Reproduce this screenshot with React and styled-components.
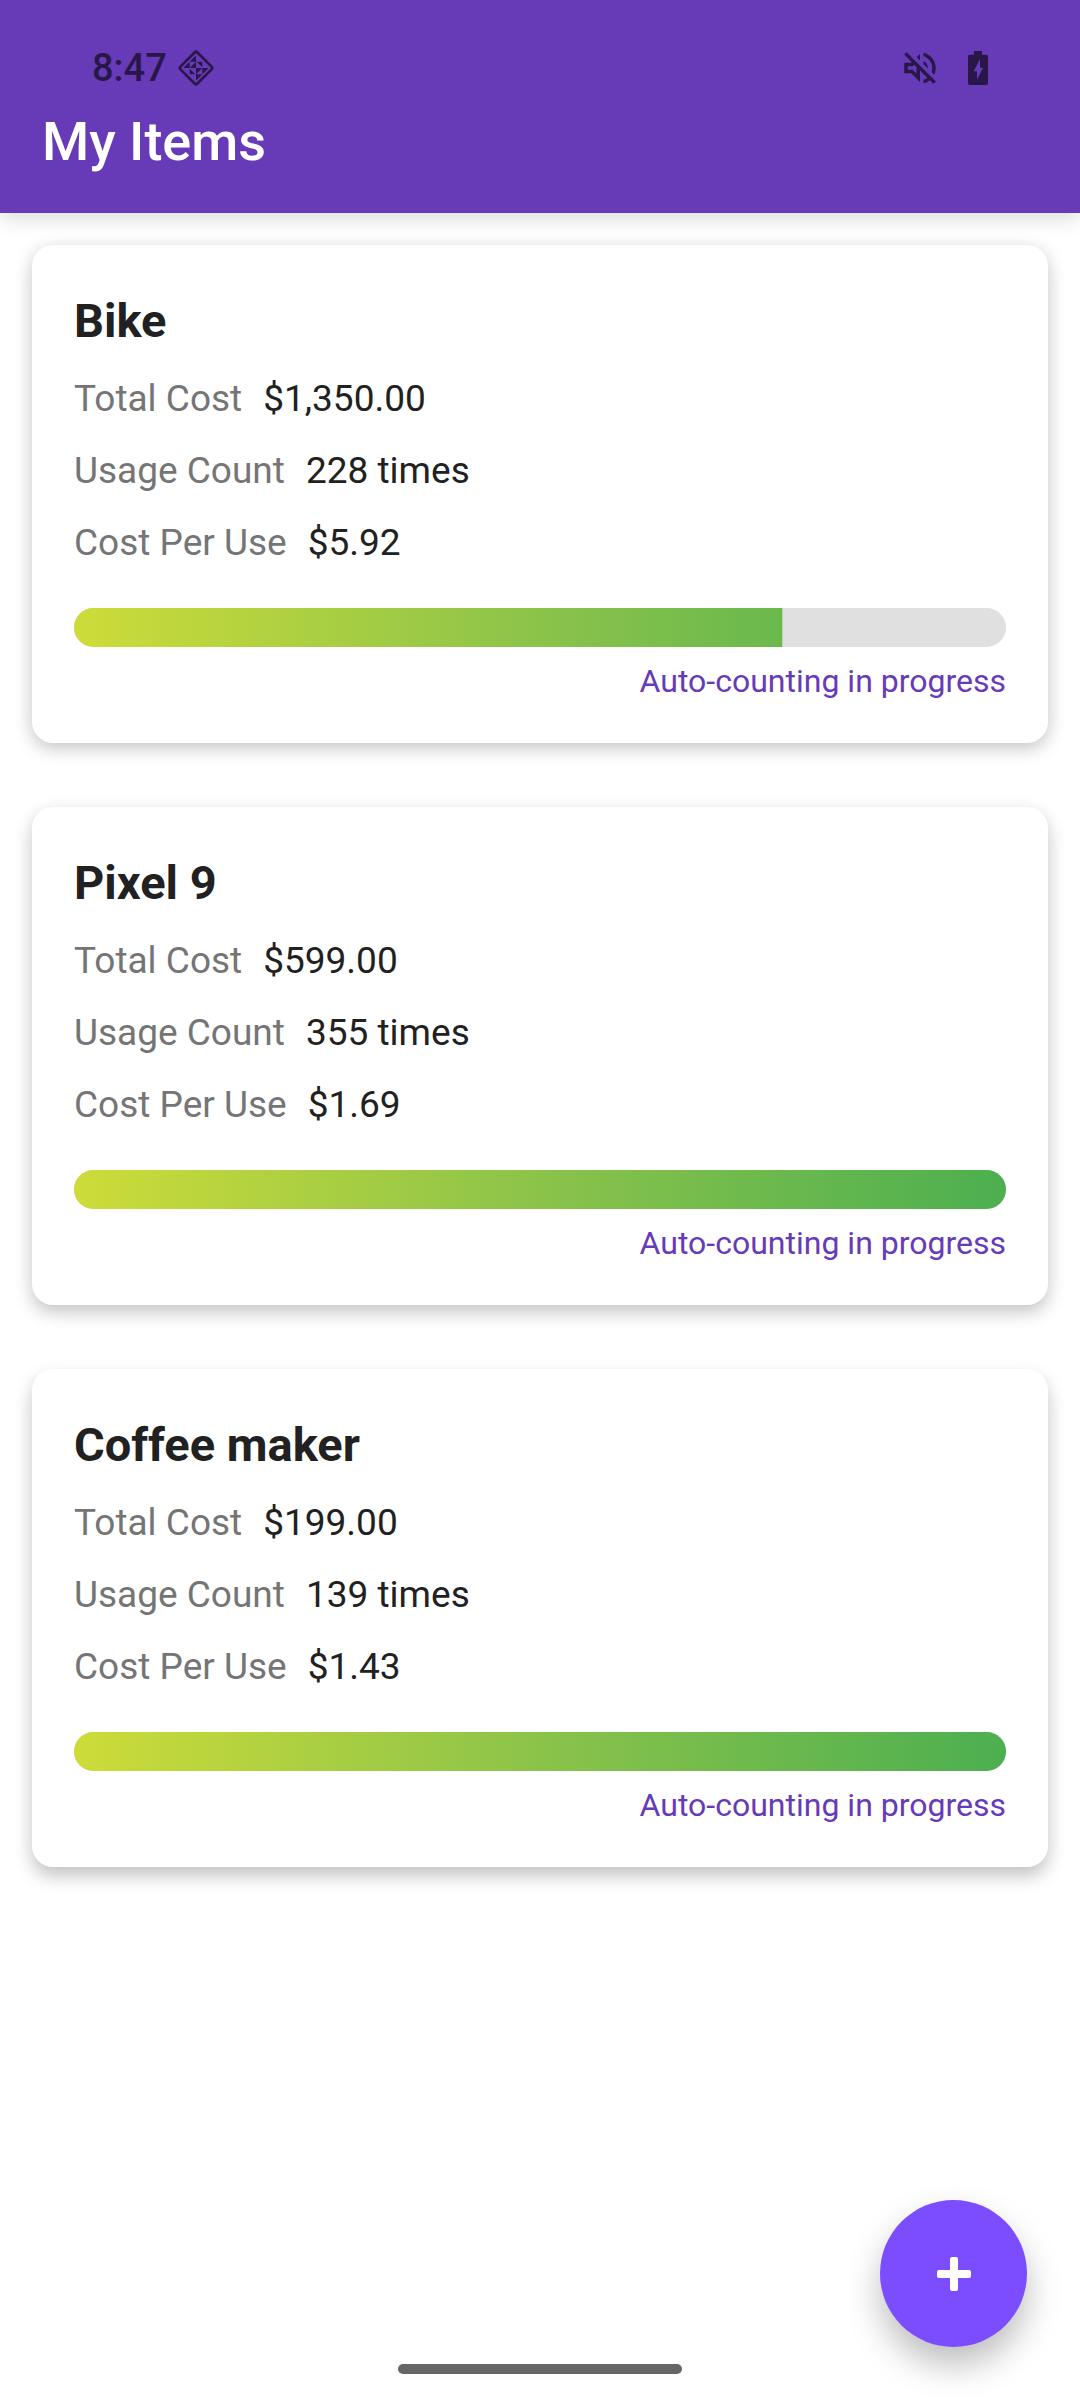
import React from "react";
import styled, { createGlobalStyle } from "styled-components";

const GlobalStyle = createGlobalStyle`
  * {
    box-sizing: border-box;
  }
  body {
    margin: 0;
    background-color: #ffffff;
    font-family: Roboto, "Noto Sans", sans-serif;
    color: #212121;
  }
`;
const Page = styled.div`
  min-height: 100vh;
  display: flex;
  flex-direction: column;
`;
const Header = styled.header`
  padding: 44px 42px 21px;
  background-color: #673ab7;
  box-shadow: 0 4px 20px rgba(0, 0, 0, 0.16);
`;
const StatusBar = styled.div`
  height: 48px;
  padding: 0 50px;
  display: flex;
  align-items: center;
  justify-content: space-between;
  color: #291749;
`;
const StatusGroup = styled.div`
  display: flex;
  align-items: center;
  gap: ${({ $gap }) => $gap}px;
`;
const Clock = styled.time`
  font-size: 38px;
  line-height: 48px;
  font-weight: 500;
`;
const AppTitle = styled.h1`
  margin: 0;
  font-size: 54px;
  line-height: 100px;
  font-weight: 500;
  color: #ffffff;
`;
const ItemList = styled.main`
  flex: 1;
  padding: 32px;
  display: flex;
  flex-direction: column;
  gap: 64px;
`;
const Card = styled.article`
  padding: 42px 42px 40px;
  border-radius: 21px;
  background-color: #ffffff;
  box-shadow: 0 ${({ $drop }) => $drop}px 18px rgba(0, 0, 0, 0.24);
`;
const ItemName = styled.h2`
  margin: 0 0 8px;
  font-size: 47px;
  line-height: 68px;
  font-weight: 700;
`;
const Stats = styled.dl`
  margin: 0 0 29px;
`;
const Stat = styled.div`
  display: flex;
  gap: 21px;
  font-size: 37px;
  line-height: 72px;
`;
const StatLabel = styled.dt`
  color: #757575;
`;
const StatValue = styled.dd`
  margin: 0;
`;
const Track = styled.div`
  height: 39px;
  border-radius: 20px;
  overflow: hidden;
  background-color: #e0e0e0;
`;
// the gradient spans the whole track, the clip shows the part that is used up
const Fill = styled.div`
  height: 100%;
  background: linear-gradient(90deg, #cddc39, #8bc34a, #4caf50);
`;
const Status = styled.p`
  margin: 12px 0 0;
  font-size: 32px;
  line-height: 44px;
  text-align: right;
  color: #673ab7;
`;
const AddButton = styled.button`
  position: fixed;
  right: 53px;
  bottom: 53px;
  width: 147px;
  height: 147px;
  padding: 0;
  border: none;
  border-radius: 50%;
  display: flex;
  align-items: center;
  justify-content: center;
  background-color: #7c4dff;
  color: #ffffff;
  box-shadow: 0 18px 34px rgba(0, 0, 0, 0.26);
  cursor: pointer;
`;
const HomeIndicator = styled.div`
  position: fixed;
  left: 50%;
  bottom: 26px;
  width: 284px;
  height: 10px;
  border-radius: 5px;
  transform: translateX(-50%);
  background-color: #666666;
`;

const items = [
  { name: "Bike", total: "$1,350.00", count: 228, perUse: "$5.92", progress: 76, drop: 5 },
  { name: "Pixel 9", total: "$599.00", count: 355, perUse: "$1.69", progress: 100, drop: 7 },
  { name: "Coffee maker", total: "$199.00", count: 139, perUse: "$1.43", progress: 100, drop: 9 },
];

const PinwheelIcon = () => (
  <svg width="38" height="38" viewBox="-57 -57 114 114" aria-hidden="true">
    <rect
      x="-36"
      y="-36"
      width="72"
      height="72"
      rx="6"
      transform="rotate(45)"
      fill="none"
      stroke="currentColor"
      strokeWidth="8"
    />
    <path
      fill="currentColor"
      d="M0-38V-19H-19Z M-38 0L-19-19V0Z M0-19V0H-19Z M2-19H19V-2Z M-19 2L-2 19H-19Z M0 0H19L0 19Z M19 0H38L19 19Z M0 19H19L0 38Z"
    />
  </svg>
);

const MutedIcon = () => (
  <svg width="42" height="42" viewBox="0 0 24 24" fill="currentColor" aria-hidden="true">
    <path d="M4.34 2.93L2.93 4.34 7.29 8.7 7 9H3v6h4l5 5v-6.59l4.18 4.18c-.65.49-1.38.88-2.18 1.11v2.06c1.34-.3 2.57-.92 3.61-1.75l2.05 2.05 1.41-1.41L4.34 2.93zM10 15.17L7.83 13H5v-2h2.83l.88-.88L10 11.41v3.76zM19 12c0 .82-.15 1.61-.41 2.34l1.53 1.53c.56-1.17.88-2.48.88-3.87 0-4.28-2.99-7.86-7-8.77v2.06c2.89.86 5 3.54 5 6.71zm-7-8l-1.88 1.88L12 7.76V4zm4.5 8c0-1.77-1.02-3.29-2.5-4.03v1.79l2.48 2.48c.01-.08.02-.16.02-.24z" />
  </svg>
);

const BatteryIcon = () => (
  <svg width="20" height="34" viewBox="0 0 60 102" aria-hidden="true">
    <path
      fill="currentColor"
      fillRule="evenodd"
      d="M18 0H42V11H54Q60 11 60 17V96Q60 102 54 102H6Q0 102 0 96V17Q0 11 6 11H18Z M36 25L17 61H27V86L45 50H36Z"
    />
  </svg>
);

const PlusIcon = () => (
  <svg width="34" height="34" viewBox="0 0 34 34" fill="currentColor" aria-hidden="true">
    <rect x="13" y="0" width="8" height="34" rx="2" />
    <rect x="0" y="13" width="34" height="8" rx="2" />
  </svg>
);

const ItemCard = ({ item }) => {
  return (
    <Card $drop={item.drop}>
      <ItemName>{item.name}</ItemName>
      <Stats>
        <Stat>
          <StatLabel>Total Cost</StatLabel>
          <StatValue>{item.total}</StatValue>
        </Stat>
        <Stat>
          <StatLabel>Usage Count</StatLabel>
          <StatValue>{item.count} times</StatValue>
        </Stat>
        <Stat>
          <StatLabel>Cost Per Use</StatLabel>
          <StatValue>{item.perUse}</StatValue>
        </Stat>
      </Stats>
      <Track
        role="progressbar"
        aria-label={item.name}
        aria-valuenow={item.progress}
        aria-valuemin={0}
        aria-valuemax={100}
      >
        <Fill style={{ clipPath: `inset(0 ${100 - item.progress}% 0 0)` }} />
      </Track>
      <Status>Auto-counting in progress</Status>
    </Card>
  );
};

const App = () => {
  return (
    <Page>
      <GlobalStyle />
      <Header>
        <StatusBar>
          <StatusGroup $gap={10}>
            <Clock>8:47</Clock>
            <PinwheelIcon />
          </StatusGroup>
          <StatusGroup $gap={27}>
            <MutedIcon />
            <BatteryIcon />
          </StatusGroup>
        </StatusBar>
        <AppTitle>My Items</AppTitle>
      </Header>
      <ItemList>
        {items.map((item) => (
          <ItemCard key={item.name} item={item} />
        ))}
      </ItemList>
      <AddButton type="button" aria-label="Add item">
        <PlusIcon />
      </AddButton>
      <HomeIndicator />
    </Page>
  );
};

export default App;
